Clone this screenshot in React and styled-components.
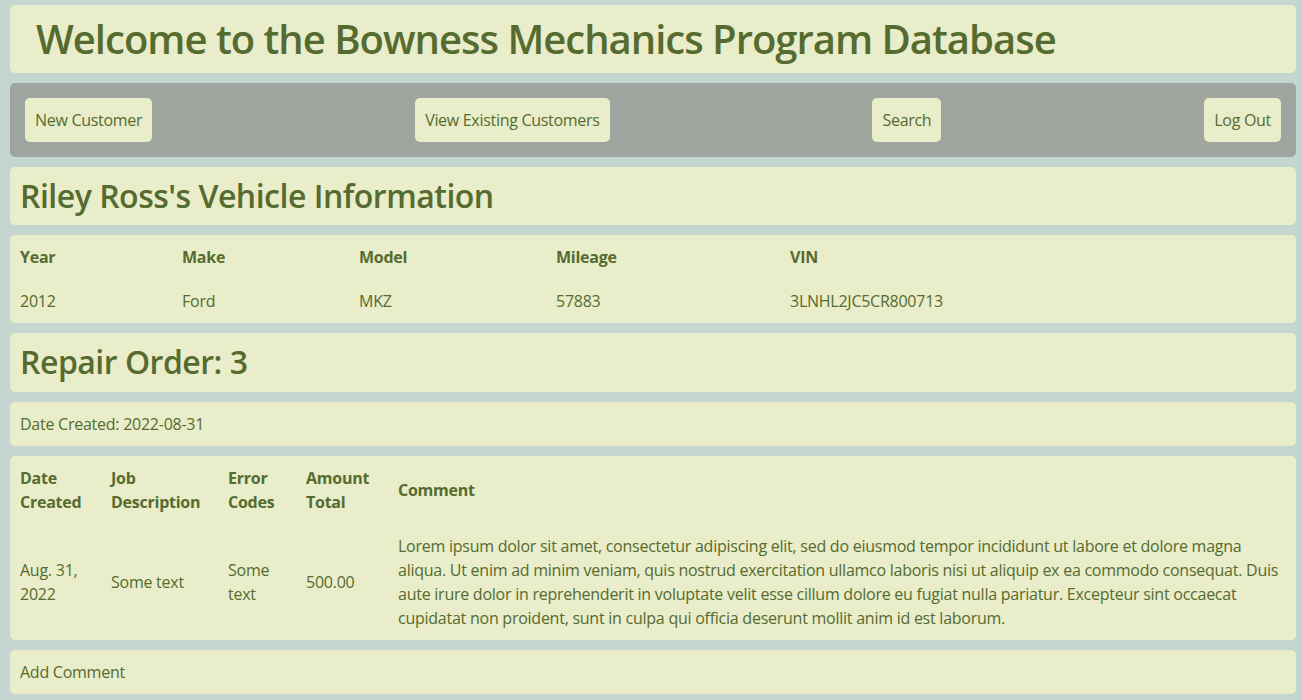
import React from 'react';
import styled, { createGlobalStyle } from 'styled-components';

const GlobalStyle = createGlobalStyle`
  * { box-sizing: border-box; }
  body {
    margin: 0;
    background: #c5d5cf;
    color: #556b2f;
    font-family: "Open Sans", "Noto Sans", sans-serif;
    font-size: 16px;
    line-height: 1.5;
    letter-spacing: -0.25px;
  }
`;

const Page = styled.div`
  display: flex;
  flex-direction: column;
  gap: 10px;
  padding: 5px 6px 5px 10px;
`;

const Card = styled.div`
  background: #e9edca;
  border-radius: 5px;
  padding: ${props => (props.flush ? '0' : '10px')};
`;

const Title = styled.h1`
  margin: 0;
  padding-left: 16px;
  font-size: 40px;
  font-weight: 600;
  line-height: 1.2;
  letter-spacing: -1px;
`;

const Heading = styled.h2`
  margin: 0;
  font-size: 32px;
  font-weight: 600;
  line-height: 1.2;
  letter-spacing: -0.5px;
`;

const NavBar = styled.nav`
  display: flex;
  justify-content: space-between;
  align-items: center;
  background: #9ea59f;
  border-radius: 5px;
  padding: 15px;
`;

const NavButton = styled.button`
  background: #e9edca;
  color: #556b2f;
  border: none;
  border-radius: 5px;
  padding: 10px;
  font: inherit;
  letter-spacing: -0.3px;
  line-height: 24px;
  cursor: pointer;
`;

const Table = styled.table`
  width: 100%;
  border-collapse: collapse;
  table-layout: fixed;
  th, td {
    padding: 10px;
    text-align: left;
    vertical-align: middle;
  }
  th {
    font-weight: 700;
  }
`;

const Text = styled.div`
  min-height: 24px;
`;

const vehicleCols = [162, 177, 197, 234];
const repairCols = [91, 117, 78, 92];

const comment =
  'Lorem ipsum dolor sit amet, consectetur adipiscing elit, sed do eiusmod tempor incididunt ut labore et dolore magna aliqua. Ut enim ad minim veniam, quis nostrud exercitation ullamco laboris nisi ut aliquip ex ea commodo consequat. Duis aute irure dolor in reprehenderit in voluptate velit esse cillum dolore eu fugiat nulla pariatur. Excepteur sint occaecat cupidatat non proident, sunt in culpa qui officia deserunt mollit anim id est laborum.';

export default function App() {
  return (
    <Page>
      <GlobalStyle />
      <Card>
        <Title>Welcome to the Bowness Mechanics Program Database</Title>
      </Card>
      <NavBar>
        <NavButton>New Customer</NavButton>
        <NavButton>View Existing Customers</NavButton>
        <NavButton>Search</NavButton>
        <NavButton>Log Out</NavButton>
      </NavBar>
      <Card>
        <Heading>Riley Ross's Vehicle Information</Heading>
      </Card>
      <Card flush>
        <Table>
          <colgroup>
            {vehicleCols.map((w, i) => <col key={i} style={{ width: w }} />)}
            <col />
          </colgroup>
          <thead>
            <tr>
              <th>Year</th>
              <th>Make</th>
              <th>Model</th>
              <th>Mileage</th>
              <th>VIN</th>
            </tr>
          </thead>
          <tbody>
            <tr>
              <td>2012</td>
              <td>Ford</td>
              <td>MKZ</td>
              <td>57883</td>
              <td>3LNHL2JC5CR800713</td>
            </tr>
          </tbody>
        </Table>
      </Card>
      <Card>
        <Heading>Repair Order: 3</Heading>
      </Card>
      <Card>
        <Text>Date Created: 2022-08-31</Text>
      </Card>
      <Card flush>
        <Table>
          <colgroup>
            {repairCols.map((w, i) => <col key={i} style={{ width: w }} />)}
            <col />
          </colgroup>
          <thead>
            <tr>
              <th>Date Created</th>
              <th>Job Description</th>
              <th>Error Codes</th>
              <th>Amount Total</th>
              <th>Comment</th>
            </tr>
          </thead>
          <tbody>
            <tr>
              <td>Aug. 31, 2022</td>
              <td>Some text</td>
              <td>Some text</td>
              <td>500.00</td>
              <td>{comment}</td>
            </tr>
          </tbody>
        </Table>
      </Card>
      <Card>
        <Text>Add Comment</Text>
      </Card>
    </Page>
  );
}
